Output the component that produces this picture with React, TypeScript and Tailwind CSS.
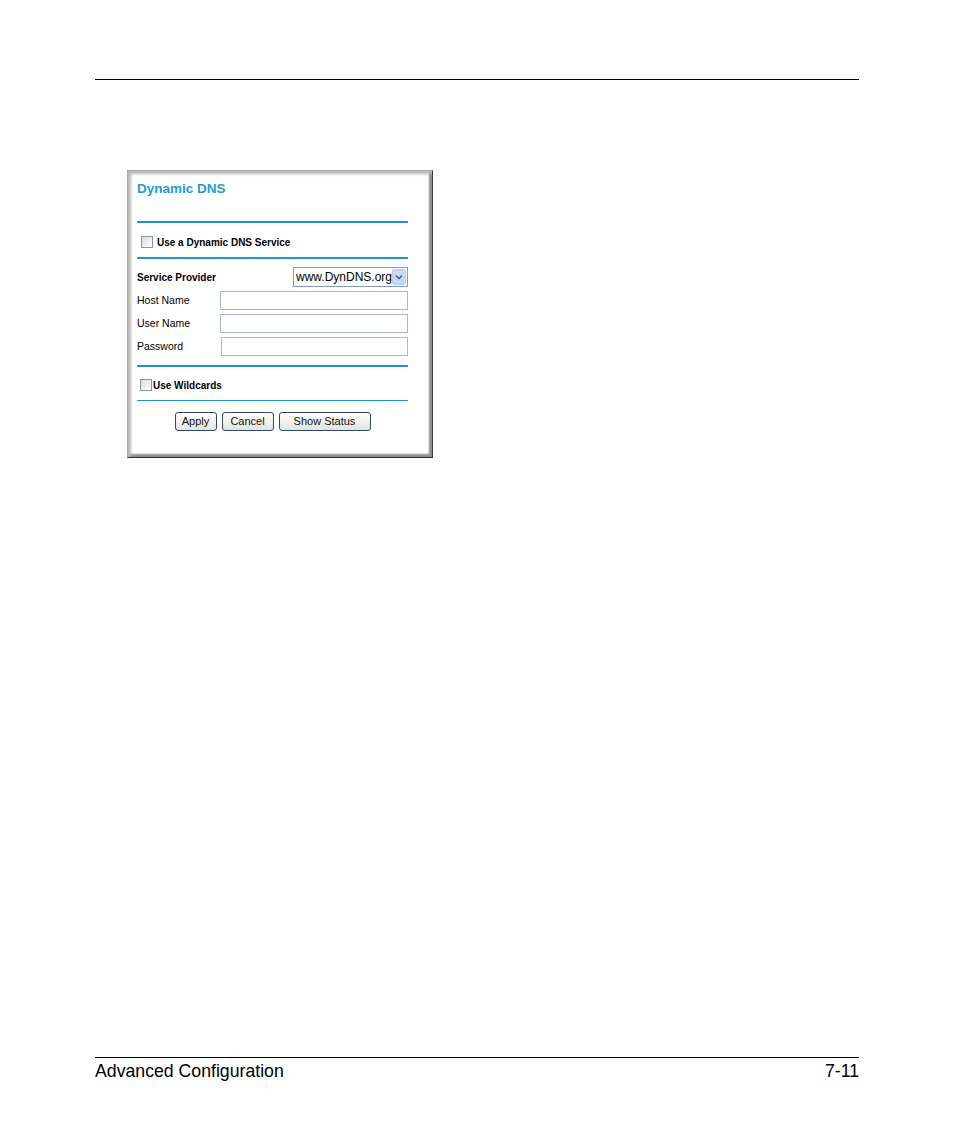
import React from "react";

function Checkbox() {
  return (
    <span className="block w-[12px] h-[12px] border border-[#8596a8] bg-gradient-to-br from-[#dcdcd6] to-[#ffffff]" />
  );
}

function TextBox({ className = "" }: { className?: string }) {
  return <div className={`h-[19px] border border-[#a5b9cf] bg-white ${className}`} />;
}

function Button({ label, width }: { label: string; width: string }) {
  return (
    <div
      className={`${width} h-[19px] flex items-center justify-center rounded-[3px] border border-[#2d4a66] bg-gradient-to-b from-[#ffffff] to-[#e3e3dc] text-[11px] text-[#111] leading-none`}
    >
      {label}
    </div>
  );
}

export default function App() {
  return (
    <div className="w-[954px] h-[1145px] bg-white flex flex-col px-[95px] font-['Liberation_Sans',Arial,sans-serif] text-black">
      <div className="mt-[79px] h-px bg-black" />

      <div className="mt-[90px] ml-[32px] w-[306px] h-[288px] border border-t-[#a8a8a8] border-l-[#a8a8a8] border-r-[#3a3a3a] border-b-[#2a2a2a] shadow-[inset_3px_3px_3px_#b8b8b8,inset_-3px_-3px_2px_#8c8c8c] flex flex-col pl-[9px]">
        <div className="w-[271px] flex flex-col">
          <div className="mt-[10px] h-[16px] leading-[16px] text-[13.5px] font-bold text-[#1f9ccf]">
            Dynamic DNS
          </div>
          <div className="mt-[24px] h-[2px] bg-[#2196c8]" />

          <div className="mt-[11px] h-[16px] flex items-center pl-[4px] gap-[4px]">
            <Checkbox />
            <span className="text-[10px] font-bold">Use a Dynamic DNS Service</span>
          </div>
          <div className="mt-[7px] h-[2px] bg-[#2196c8]" />

          <div className="mt-[8px] h-[20px] flex items-center justify-between">
            <span className="text-[10px] font-bold">Service Provider</span>
            <div className="w-[115px] h-[20px] border border-[#7f9db9] bg-white flex items-center justify-between pl-[2px] pr-[1px]">
              <span className="text-[12px] leading-none">www.DynDNS.org</span>
              <span className="w-[14px] h-[16px] bg-[#c9d8f7] border border-[#b9cbf2] rounded-[2px] flex items-center justify-center">
                <svg width="8" height="6" viewBox="0 0 8 6">
                  <path d="M1 1.5 L4 4.5 L7 1.5" fill="none" stroke="#4d6185" strokeWidth="1.6" />
                </svg>
              </span>
            </div>
          </div>

          <div className="mt-[4px] flex items-center">
            <span className="w-[83px] text-[10.5px]">Host Name</span>
            <TextBox className="w-[188px]" />
          </div>
          <div className="mt-[4px] flex items-center">
            <span className="w-[83px] text-[10.5px]">User Name</span>
            <TextBox className="w-[188px]" />
          </div>
          <div className="mt-[4px] flex items-center">
            <span className="w-[84px] text-[10.5px]">Password</span>
            <TextBox className="w-[187px]" />
          </div>

          <div className="mt-[9px] h-[2px] bg-[#2196c8]" />

          <div className="mt-[11px] h-[14px] flex items-center pl-[3px] gap-[1px]">
            <Checkbox />
            <span className="text-[10px] font-bold">Use Wildcards</span>
          </div>
          <div className="mt-[8px] h-px bg-[#2196c8]" />

          <div className="mt-[11px] flex justify-center gap-[5px]">
            <Button label="Apply" width="w-[42px]" />
            <Button label="Cancel" width="w-[52px]" />
            <Button label="Show Status" width="w-[92px]" />
          </div>
        </div>
      </div>

      <div className="mt-[599px] h-px bg-black" />
      <div className="mt-[3px] flex justify-between text-[17.7px] leading-[20px]">
        <span>Advanced Configuration</span>
        <span>7-11</span>
      </div>
    </div>
  );
}
